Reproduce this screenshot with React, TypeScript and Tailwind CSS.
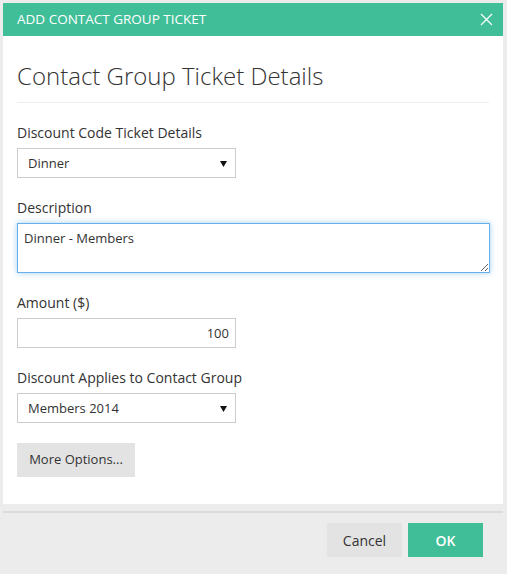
import { useState } from 'react'

const FONT = { fontFamily: '"Open Sans", "Liberation Sans", sans-serif' }

function Caret() {
  return (
    <svg width="7" height="6" viewBox="0 0 7 6" className="absolute right-[8px] top-[12px]">
      <path d="M0 0H7L3.5 6Z" fill="#111" />
    </svg>
  )
}

function FakeSelect({ value }: { value: string }) {
  return (
    <div className="relative h-[30px] w-[219px] border border-[#cccccc] bg-white pl-[10px] text-[13px] leading-[28px] text-[#333]">
      {value}
      <Caret />
    </div>
  )
}

export default function App() {
  const [desc, setDesc] = useState('Dinner - Members')
  const [amount, setAmount] = useState('100')

  return (
    <div className="h-[574px] w-[507px] bg-[#ececec] pl-[3px] pt-[3px] text-[#333]" style={FONT}>
      <div className="w-[500px]">
        <div className="flex h-[33px] items-center justify-between bg-[#3fbe98] pl-[14px] pr-[10px]">
          <span className="text-[13.5px] text-white">ADD CONTACT GROUP TICKET</span>
          <svg width="13" height="13" viewBox="0 0 13 13">
            <path d="M1 1L12 12M12 1L1 12" stroke="#fff" strokeWidth="1.2" />
          </svg>
        </div>
        <div className="h-[468px] bg-white px-[14px] pt-[24px]">
          <h1 className="border-b border-[#eeeeee] pb-[10px] text-[24px] font-light leading-[32px]">
            Contact Group Ticket Details
          </h1>
          <div className="mt-[20px] flex flex-col">
            <label className="text-[14px] leading-[20px]">Discount Code Ticket Details</label>
            <div className="mt-[5px]">
              <FakeSelect value="Dinner" />
            </div>

            <label className="mt-[20px] text-[14px] leading-[20px]">Description</label>
            <textarea
              value={desc}
              onChange={(e) => setDesc(e.target.value)}
              className="mt-[5px] h-[50px] w-[473px] border border-[#66afe9] px-[6px] py-[5px] text-[13px] leading-[18px] text-[#333] shadow-[0_0_6px_rgba(102,175,233,0.6)] outline-none"
            />

            <label className="mt-[20px] text-[14px] leading-[20px]">Amount ($)</label>
            <input
              value={amount}
              onChange={(e) => setAmount(e.target.value)}
              className="mt-[5px] h-[30px] w-[219px] border border-[#cccccc] px-[6px] text-right text-[13px] text-[#333] outline-none"
            />

            <label className="mt-[20px] text-[14px] leading-[20px]">Discount Applies to Contact Group</label>
            <div className="mt-[5px]">
              <FakeSelect value="Members 2014" />
            </div>

            <div className="mt-[20px]">
              <button className="h-[34px] w-[118px] bg-[#e3e3e3] text-[13px] text-[#333]">More Options...</button>
            </div>
          </div>
        </div>
        <div className="mt-[7px] border-t-2 border-[#dcdcdc]" />
        <div className="flex justify-end gap-[6px] pr-[20px] pt-[10px]">
          <button className="h-[34px] w-[75px] bg-[#e3e3e3] text-[14px] text-[#333]">Cancel</button>
          <button className="h-[34px] w-[75px] bg-[#3fbe98] text-[14px] font-semibold text-white">OK</button>
        </div>
      </div>
    </div>
  )
}
